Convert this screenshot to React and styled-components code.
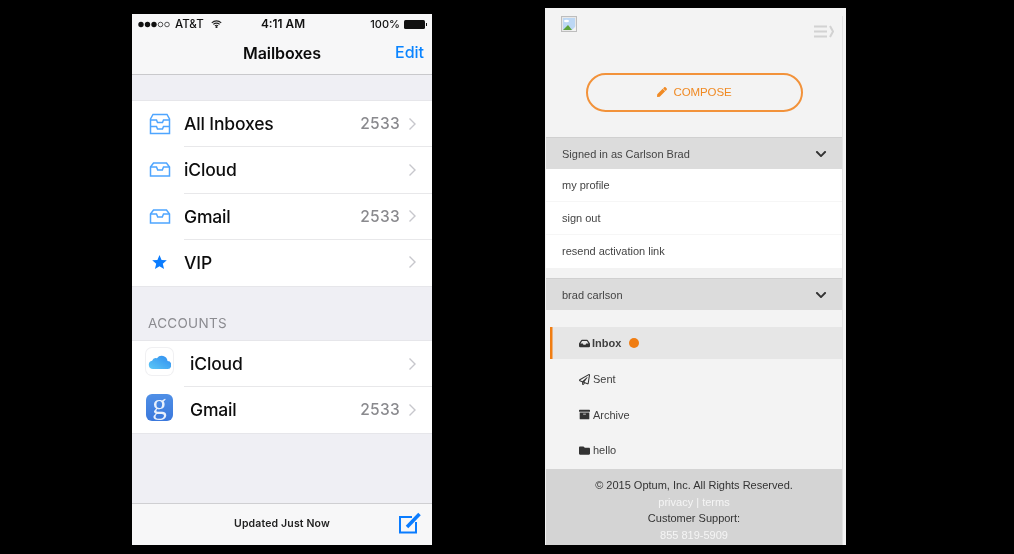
import React from "react";
import styled, { createGlobalStyle } from "styled-components";
import { FaInbox, FaRegPaperPlane, FaArchive, FaFolder, FaPen, FaChevronDown } from "react-icons/fa";

const Global = createGlobalStyle`
  html, body { margin: 0; padding: 0; background: #000; }
  #root { width: 1014px; height: 554px; overflow: hidden; }
  * { box-sizing: border-box; }
`;

const Stage = styled.div`
  width: 1014px; height: 554px; background: #000; display: flex; align-items: flex-start; padding-left: 132px;
`;

/* ---------- phone ---------- */
const Phone = styled.section`
  width: 300px; height: 531px; margin-top: 14px; background: #efeff4; display: flex; flex-direction: column;
  font-family: Inter, "Liberation Sans", sans-serif; color: #0b0b0b; filter: blur(0.3px);
`;
const TopChrome = styled.header`
  height: 61px; background: #f7f7f8; border-bottom: 1px solid #c9c9cc; display: flex; flex-direction: column;
`;
const StatusBar = styled.div`
  height: 20px; display: grid; grid-template-columns: 1fr auto 1fr; align-items: center; padding: 0 6px;
  font-size: 11.5px; font-weight: 500; color: #111;
`;
const StatusSide = styled.div`
  display: flex; align-items: center; gap: 3px; justify-content: ${p => (p.$end ? "flex-end" : "flex-start")};
`;
const Carrier = styled.span` margin-right: 4px; `;
const Percent = styled.span` font-size: 11px; `;
const Clock = styled.span` font-weight: 600; font-size: 11.8px; margin-left: 2px; `;
const Battery = styled.span`
  width: 21px; height: 9px; background: #111; border-radius: 1.5px; position: relative; margin-left: 1px; margin-right: 1px;
  &::after { content: ""; position: absolute; right: -2px; top: 3px; width: 1.5px; height: 3px; background: #111; }
`;
const NavBar = styled.div`
  flex: 1; position: relative; display: flex; align-items: center; justify-content: center; padding-bottom: 2px;
`;
const NavTitle = styled.h1` margin: 0; font-size: 16px; font-weight: 600; letter-spacing: -.1px; `;
const NavAction = styled.span`
  position: absolute; right: 8px; top: 8px; font-size: 16px; font-weight: 500; color: #0a84ff;
`;
const Group = styled.ul`
  list-style: none; margin: ${p => p.$top}px 0 0; padding: 0; background: #fff; border-top: 1px solid #e6e6ea; border-bottom: 1px solid #e6e6ea;
`;
const Row = styled.li`
  height: ${p => p.$h}px; display: flex; align-items: center; position: relative; padding-bottom: 1px;
  &:not(:last-child)::after { content: ""; position: absolute; left: 52px; right: 0; bottom: 0; height: 1px; background: #e8e8ea; }
`;
const IconSlot = styled.span`
  width: 52px; flex: none; display: flex; justify-content: center; padding-left: 11px; padding-right: 8px;
`;
const RowLabel = styled.span`
  flex: 1; font-size: 17.5px; font-weight: 550; letter-spacing: -.15px; padding-left: ${p => p.$indent || 0}px; color: #0d0d0d;
`;
const Count = styled.span` font-size: 15.5px; font-weight: 550; color: #8a8a8e; letter-spacing: .3px; margin-right: 8px; `;
const Chevron = styled.svg` width: 9px; height: 14px; margin-right: 15px; flex: none; `;
const SectionLabel = styled.div`
  margin-top: 28px; padding-left: 16px; height: 25px; font-size: 13.5px; font-weight: 400; color: #8b8b90; letter-spacing: .3px; line-height: 17px;
`;
const Spacer = styled.div` flex: 1; `;
const Toolbar = styled.footer`
  height: 42px; background: #f7f7f8; border-top: 1px solid #cfcfd2; position: relative; display: flex; align-items: center; justify-content: center;
  font-size: 10.5px; font-weight: 600; letter-spacing: .15px; color: #222; padding-bottom: 2px;
`;
const ComposeIcon = styled.svg` position: absolute; right: 10px; top: 7px; width: 24px; height: 24px; `;
const AppTile = styled.span`
  width: 27px; height: 27px; border-radius: 6px; display: flex; align-items: center; justify-content: center;
  background: ${p => p.$bg}; box-shadow: ${p => (p.$ring ? "0 0 0 1px #f0f0f2" : "none")}; margin: 0 0 4px 14px; flex: none;
`;
const GoogleG = styled.span`
  font-family: "Liberation Serif", serif; color: #e9f0fc; font-size: 29px; line-height: 27px; transform: translateY(-3px);
`;

const Caret = () => (
  <Chevron viewBox="0 0 9 14"><path d="M1.500 1.500 7 7l-5.500 5.500" fill="none" stroke="#c7c7cc" strokeWidth="1.400" /></Chevron>
);
const TrayAll = () => (
  <svg width="22" height="22" viewBox="0 0 22 22" fill="none" stroke="#4ea5ff" strokeWidth="1.500">
    <path d="M1.500 6 4 1.500h14L20.500 6v14.500h-19z" />
    <path d="M1.500 7h6l1 2.500h5l1-2.500h6" />
    <path d="M1.500 13.500h6l1 2.500h5l1-2.500h6" />
  </svg>
);
const Tray = () => (
  <svg width="22" height="15" viewBox="0 0 22 15" fill="none" stroke="#4ea5ff" strokeWidth="1.500">
    <path d="M1.500 5 4.500 1h13l3 4v9h-19z" />
    <path d="M1.500 5h6l1.200 3h4.600l1.200-3h6" />
  </svg>
);
const Star = () => (
  <svg width="15" height="14" viewBox="0 0 24 23"><path fill="#0a7cff" d="M12 0l3.400 8.200 8.600.6-6.600 5.600 2.100 8.600L12 18.300l-7.500 4.700 2.100-8.600L0 8.800l8.600-.6z" /></svg>
);
const CloudIcon = () => (
  <svg width="23" height="15" viewBox="0 0 23 15">
    <defs><linearGradient id="cl" x1="0" x2="1" y1="1" y2="0"><stop offset="0" stopColor="#5cc8f6" /><stop offset="1" stopColor="#2f8cf0" /></linearGradient></defs>
    <path fill="url(#cl)" d="M5 15a4.200 4.200 0 0 1-.9-8.300A4 4 0 0 1 9 4.200 5.800 5.800 0 0 1 19.500 7a4 4 0 0 1-.5 8z" />
  </svg>
);
const Wifi = () => (
  <svg width="11" height="8" viewBox="0 0 14 10" fill="none" stroke="#222" strokeWidth="1.400">
    <path d="M1 3.500a8.500 8.500 0 0 1 12 0M3 5.600a5.600 5.600 0 0 1 8 0M5 7.500a2.800 2.800 0 0 1 4 0" /><circle cx="7" cy="9" r=".6" fill="#222" />
  </svg>
);
const Signal = () => (
  <svg width="34" height="7" viewBox="0 0 34 7">
    {[3, 9.5, 16].map(x => <circle key={x} cx={x} cy="3.500" r="2.700" fill="#111" />)}
    {[22.5, 29].map(x => <circle key={x} cx={x} cy="3.500" r="2.300" fill="none" stroke="#111" strokeWidth=".7" />)}
  </svg>
);

/* ---------- web panel ---------- */
const Panel = styled.section`
  width: 301px; height: 537px; margin-top: 8px; margin-left: 113px; background: #f3f3f3; padding-left: 1px; padding-right: 4px;
  display: flex; flex-direction: column; position: relative; font-family: "Liberation Sans", Arial, sans-serif; color: #444; font-size: 11px;
  filter: blur(0.3px);
  &::after { content: ""; position: absolute; right: 3px; top: 8px; bottom: 0; width: 1px; background: #e2e2e2; }
`;
const PanelTop = styled.div` height: 129px; position: relative; display: flex; justify-content: center; padding-top: 65px; padding-left: 1px; `;
const BrokenImage = styled.svg` position: absolute; left: 15px; top: 8px; `;
const Collapse = styled.svg` position: absolute; right: 8px; top: 17px; `;
const ComposeButton = styled.button`
  width: 217px; height: 39px; border: 2px solid #f2923a; border-radius: 20px; background: transparent; color: #f08a24;
  font: 11.5px "Liberation Sans", Arial, sans-serif; letter-spacing: -.1px; display: flex; align-items: center; justify-content: center; gap: 6px; padding: 0 0 2px 0;
`;
const AccordionHead = styled.div`
  height: 32px; background: #dcdcdc; border-top: 1px solid #d0d0d0; display: flex; align-items: center; justify-content: space-between;
  padding: 0 15px 0 16px; color: #444; font-size: 11px; margin-top: ${p => p.$top || 0}px;
`;
const Menu = styled.ul` list-style: none; margin: 0; padding: 0; background: #fff; margin-right: -1px; `;
const MenuItem = styled.li`
  height: 33px; display: flex; align-items: center; padding-left: 16px; color: #444; font-size: 11px;
  &:not(:last-child) { border-bottom: 1px solid #f6f6f6; }
  &:last-child { padding-bottom: 2px; }
`;
const Nav = styled.nav` margin-top: 17px; display: flex; flex-direction: column; padding-left: 4px; `;
const NavItem = styled.div`
  height: ${p => (p.$active ? 32 : 35.5)}px; margin-bottom: ${p => (p.$active ? 2.5 : 0)}px;
  display: flex; align-items: center; gap: ${p => (p.$active ? 2 : 3)}px; padding-left: 29px; font-size: 11px; color: #3f3f3f;
  font-weight: ${p => (p.$active ? 700 : 400)};
  background: ${p => (p.$active ? "#e6e6e6" : "transparent")};
  box-shadow: ${p => (p.$active ? "inset 2.5px 0 0 #f07d12" : "none")};
  svg { font-size: 11px; color: #333; flex: none; }
`;
const Dot = styled.span` width: 10px; height: 10px; border-radius: 50%; background: #f07d12; margin-left: 6px; `;
const PanelFooter = styled.footer`
  margin-top: auto; height: 76px; background: #d4d4d4; text-align: center; color: #3c3c3c; font-size: 11px; line-height: 16.7px; padding-top: 8px; overflow: hidden;
`;
const FootLine = styled.div` color: ${p => (p.$light ? "#f5f5f5" : "#333")}; `;

const rows = [
  { icon: <TrayAll />, label: "All Inboxes", count: "2533" },
  { icon: <Tray />, label: "iCloud" },
  { icon: <Tray />, label: "Gmail", count: "2533" },
  { icon: <Star />, label: "VIP" },
];

export default function App() {
  return (
    <Stage>
      <Global />
      <Phone>
        <TopChrome>
          <StatusBar>
            <StatusSide><Signal /><Carrier>AT&amp;T</Carrier><Wifi /></StatusSide>
            <Clock>4:11 AM</Clock>
            <StatusSide $end><Percent>100%</Percent><Battery /></StatusSide>
          </StatusBar>
          <NavBar><NavTitle>Mailboxes</NavTitle><NavAction>Edit</NavAction></NavBar>
        </TopChrome>
        <Group $top={25}>
          {rows.map(r => (
            <Row key={r.label} $h={46.25}>
              <IconSlot>{r.icon}</IconSlot>
              <RowLabel>{r.label}</RowLabel>
              {r.count && <Count>{r.count}</Count>}
              <Caret />
            </Row>
          ))}
        </Group>
        <SectionLabel>ACCOUNTS</SectionLabel>
        <Group $top={0}>
          <Row $h={46}>
            <AppTile $bg="#fff" $ring><CloudIcon /></AppTile>
            <RowLabel $indent={17}>iCloud</RowLabel>
            <Caret />
          </Row>
          <Row $h={46}>
            <AppTile $bg="linear-gradient(#4f8fe6,#3b78dc)"><GoogleG>g</GoogleG></AppTile>
            <RowLabel $indent={17}>Gmail</RowLabel>
            <Count>2533</Count>
            <Caret />
          </Row>
        </Group>
        <Spacer />
        <Toolbar>
          Updated Just Now
          <ComposeIcon viewBox="0 0 24 24" fill="none">
            <path d="M14 6H2v15.500h16V11" stroke="#0a7cff" strokeWidth="2" />
            <path d="M9 16 21.500 3" stroke="#0a7cff" strokeWidth="3.500" />
          </ComposeIcon>
        </Toolbar>
      </Phone>

      <Panel>
        <PanelTop>
          <BrokenImage width="16" height="16" viewBox="0 0 16 16">
            <rect x=".5" y=".5" width="15" height="15" fill="#e8e8e8" stroke="#bdbdbd" />
            <rect x="2" y="2" width="12" height="12" fill="#bcd7f4" />
            <path d="M2 14 7 9l4 5z" fill="#5da33a" />
            <path d="M10 15 15 10v5z" fill="#f3f3f3" />
            <ellipse cx="5.500" cy="5" rx="2.500" ry="1.200" fill="#fff" />
          </BrokenImage>
          <Collapse width="20" height="13" viewBox="0 0 20 13">
            <path d="M0 1.500h13M0 6.500h13M0 11.500h13" stroke="#d2d2d2" strokeWidth="2" />
            <path d="M16 1l3 5.500-3 5.500" fill="none" stroke="#d2d2d2" strokeWidth="2" />
          </Collapse>
          <ComposeButton><FaPen size={10} /> COMPOSE</ComposeButton>
        </PanelTop>
        <AccordionHead>Signed in as Carlson Brad<FaChevronDown size={12} color="#333" /></AccordionHead>
        <Menu>
          <MenuItem>my profile</MenuItem>
          <MenuItem>sign out</MenuItem>
          <MenuItem>resend activation link</MenuItem>
        </Menu>
        <AccordionHead $top={10}>brad carlson<FaChevronDown size={12} color="#333" /></AccordionHead>
        <Nav>
          <NavItem $active><FaInbox />Inbox<Dot /></NavItem>
          <NavItem><FaRegPaperPlane />Sent</NavItem>
          <NavItem><FaArchive />Archive</NavItem>
          <NavItem><FaFolder />hello</NavItem>
        </Nav>
        <PanelFooter>
          <FootLine>© 2015 Optum, Inc. All Rights Reserved.</FootLine>
          <FootLine $light>privacy | terms</FootLine>
          <FootLine>Customer Support:</FootLine>
          <FootLine $light>855 819-5909</FootLine>
        </PanelFooter>
      </Panel>
    </Stage>
  );
}
